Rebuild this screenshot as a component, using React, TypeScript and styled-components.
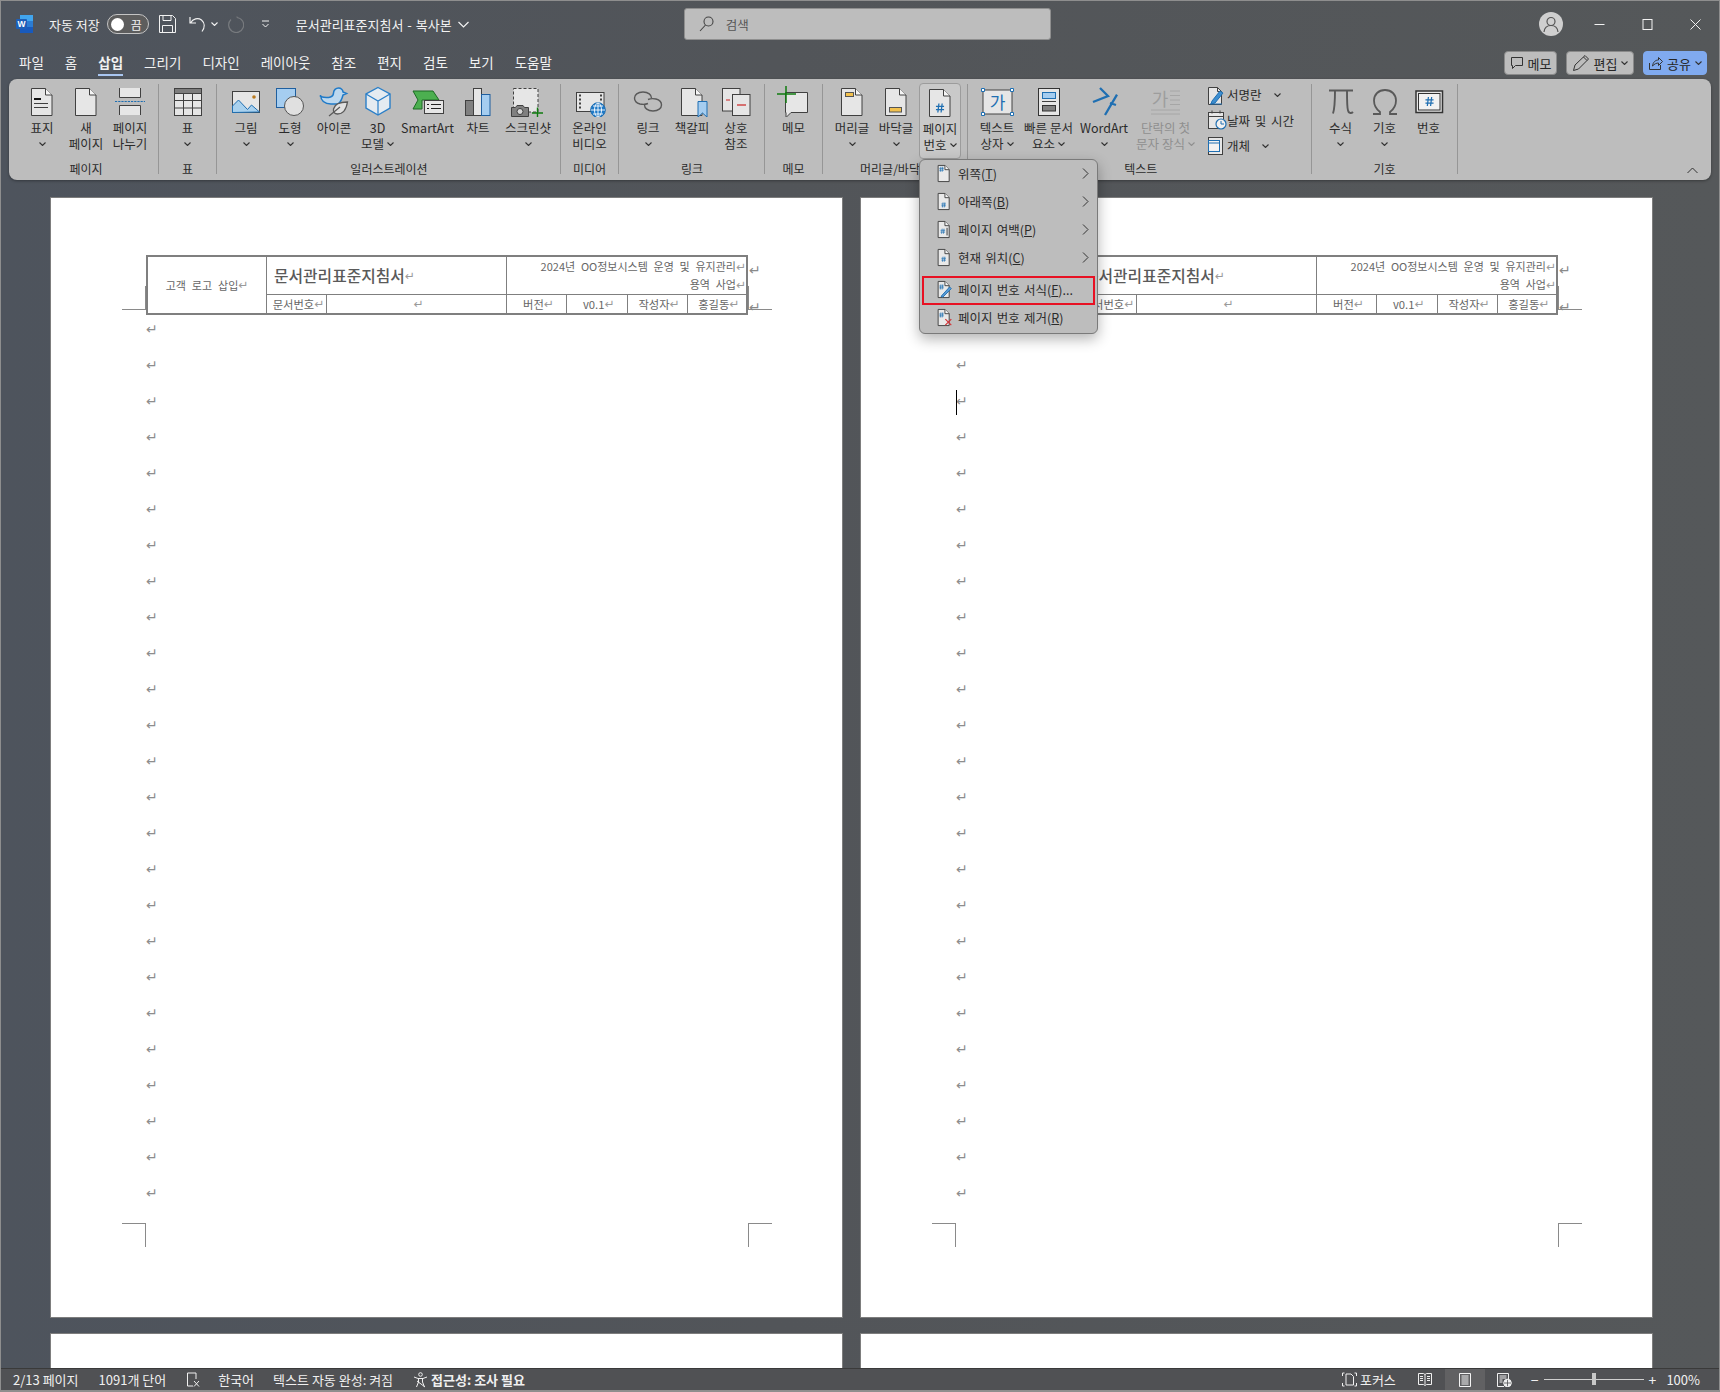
import React from "react";
import styled, { createGlobalStyle } from "styled-components";

const FONT = `"Noto Sans CJK KR", "Noto Sans", "Liberation Sans", sans-serif`;
const BLUE = "#1f6fb2";
const LINE = "#404040";
const PAPER = "#e6e6e6";

const Global = createGlobalStyle`
  html, body { margin: 0; padding: 0; background: #50555c; }
  * { box-sizing: border-box; }
  body { font-family: ${FONT}; }
`;

const Root = styled.div`
  position: relative;
  width: 1720px;
  height: 1392px;
  overflow: hidden;
  display: flex;
  flex-direction: column;
  border: 1px solid #8e8e8e;
  border-bottom-width: 2px;
  background: linear-gradient(90deg, #4e545d 0%, #525559 45%, #55585a 100%);
`;

/* ---------- title bar ---------- */
const TitleBar = styled.header`
  height: 49px;
  flex: none;
  display: flex;
  align-items: center;
  padding: 0 0 3px 15px;
  color: #f2f2f2;
  font-size: 13px;
`;
const TitleItem = styled.div<{ $ml: number }>`
  margin-left: ${(p) => p.$ml}px;
  display: flex;
  align-items: center;
  white-space: nowrap;
`;
const DocName = styled(TitleItem)`
  word-spacing: 1px;
`;
const Toggle = styled.div`
  width: 42px;
  height: 20px;
  margin-left: 7px;
  border: 1px solid #c4c4c4;
  border-radius: 10px;
  background: #5d5d5d;
  display: flex;
  align-items: center;
  justify-content: space-between;
  padding: 0 6px 0 3px;
  font-size: 12px;
  &::before {
    content: "";
    width: 13px;
    height: 13px;
    border-radius: 50%;
    background: #fff;
  }
`;
const Search = styled.div`
  width: 367px;
  height: 32px;
  margin-left: 215px;
  background: #bdbdbd;
  border: 1px solid #8f8f8f;
  border-radius: 3px;
  display: flex;
  align-items: center;
  gap: 12px;
  padding-left: 14px;
  font-size: 12.5px;
  color: #555;
`;
const WindowControls = styled.div`
  margin-left: auto;
  display: flex;
  align-items: center;
  height: 100%;
  padding-right: 18px;
  gap: 37px;
`;
const AccountSlot = styled.div`
  display: flex;
  margin-right: -6px;
`;

/* ---------- tabs ---------- */
const TabRow = styled.nav`
  height: 29px;
  flex: none;
  display: flex;
  align-items: flex-start;
  padding-left: 18px;
  gap: 21px;
  color: #f2f2f2;
  font-size: 13.5px;
`;
const Tab = styled.div<{ $active?: boolean }>`
  height: 26px;
  line-height: 25px;
  white-space: nowrap;
  font-weight: ${(p) => (p.$active ? 700 : 400)};
  border-bottom: 2px solid ${(p) => (p.$active ? "#a9c6f0" : "transparent")};
`;
const ShareGroup = styled.div`
  margin-left: auto;
  margin-right: 12px;
  margin-top: 1px;
  display: flex;
  gap: 9px;
`;
const ActionButton = styled.div<{ $w: number; $primary?: boolean }>`
  width: ${(p) => p.$w}px;
  height: 24px;
  border-radius: 4px;
  background: ${(p) => (p.$primary ? "#80aaef" : "#bdbdbd")};
  border: 1px solid ${(p) => (p.$primary ? "#80aaef" : "#8a8a8a")};
  color: #262626;
  font-size: 13px;
  display: flex;
  align-items: center;
  justify-content: center;
  gap: 4px;
`;

/* ---------- ribbon ---------- */
const Ribbon = styled.section`
  height: 101px;
  flex: none;
  margin: 0 8px;
  padding-top: 5px;
  width: 1702px;
  background: #bdbdbd;
  border-radius: 8px;
  box-shadow: 0 1px 3px rgba(0, 0, 0, 0.35);
  display: flex;
  position: relative;
  color: #2b2b2b;
`;
const Group = styled.div<{ $w: number; $pl?: number; $pr?: number }>`
  width: ${(p) => p.$w}px;
  height: 90px;
  flex: none;
  border-right: 1px solid #969696;
  padding-left: ${(p) => p.$pl ?? 0}px;
  padding-right: ${(p) => p.$pr ?? 0}px;
  display: flex;
  flex-direction: column;
`;
const GroupItems = styled.div<{ $center?: boolean }>`
  height: 78px;
  display: flex;
  justify-content: ${(p) => (p.$center ? "center" : "flex-start")};
`;
const GroupLabel = styled.div`
  height: 12px;
  line-height: 14px;
  font-size: 12px;
  text-align: center;
  white-space: nowrap;
`;
const RibbonButton = styled.div<{ $w?: number; $active?: boolean; $dim?: boolean }>`
  width: ${(p) => (p.$active ? 42 : p.$w ?? 44)}px;
  flex: none;
  height: ${(p) => (p.$active ? 76 : 74)}px;
  margin: ${(p) => (p.$active ? "-1px 1px 0" : "0")};
  padding-top: ${(p) => (p.$active ? 1 : 0)}px;
  border-radius: 4px;
  border: ${(p) => (p.$active ? "1px solid #9c9c9c" : "0")};
  background: ${(p) => (p.$active ? "#c9c9c9" : "transparent")};
  color: ${(p) => (p.$dim ? "#8f8f8f" : "inherit")};
  display: flex;
  flex-direction: column;
  align-items: center;
  font-size: 12.5px;
  line-height: 16px;
  white-space: nowrap;
`;
const IconSlot = styled.div`
  height: 36px;
  padding-top: 1px;
  flex: none;
`;
const LabelLine = styled.div`
  height: 16px;
  display: flex;
  align-items: center;
  gap: 3px;
`;
const SmallColumn = styled.div`
  display: flex;
  flex-direction: column;
  margin: -2px 0 0 10px;
`;
const SmallRow = styled.div`
  height: 25.5px;
  display: flex;
  align-items: center;
  font-size: 12.5px;
  white-space: nowrap;
  word-spacing: 2px;
`;
const SmallChevron = styled.span<{ $ml: number }>`
  margin-left: ${(p) => p.$ml}px;
  display: flex;
`;
const Collapse = styled.div`
  position: absolute;
  right: 13px;
  bottom: 6px;
  display: flex;
`;

/* ---------- document ---------- */
const DocArea = styled.main`
  flex: 1;
  min-height: 0;
  overflow: hidden;
  padding: 17px 0 0 49px;
  display: grid;
  grid-template-columns: 793px 793px;
  grid-auto-rows: 1121px;
  column-gap: 17px;
  row-gap: 15px;
  align-content: start;
`;
const Page = styled.article`
  position: relative;
  background: #fff;
  border: 1px solid #7d7d7d;
  padding: 57px 0 0 95px;
`;
const HeaderTable = styled.div`
  position: relative;
  width: 602px;
  height: 60px;
  border: 2px solid #7f7f7f;
  display: grid;
  grid-template-columns: 119px 60px 180px 60px 60.5px 60px 58.5px;
  grid-template-rows: 38px 1fr;
  font-size: 11px;
  color: #666;
`;
const Cell = styled.div<{ $col: string; $row?: string; $align?: string; $noRight?: boolean; $noBottom?: boolean }>`
  grid-column: ${(p) => p.$col};
  grid-row: ${(p) => p.$row ?? "auto"};
  display: flex;
  align-items: center;
  justify-content: ${(p) => p.$align ?? "center"};
  border-right: ${(p) => (p.$noRight ? "0" : "1px solid #7f7f7f")};
  border-bottom: ${(p) => (p.$noBottom ? "0" : "1px solid #7f7f7f")};
  white-space: nowrap;
  word-spacing: 3.5px;
`;
const FootCell = styled(Cell)`
  padding-left: 4px;
  font-size: 11.3px;
`;
const TitleCell = styled(Cell)`
  font-size: 15.8px;
  font-weight: 500;
  color: #5a5a5a;
  padding-left: 7px;
  word-spacing: 0;
`;
const RightCell = styled(Cell)`
  flex-direction: column;
  align-items: flex-end;
  padding-bottom: 2px;
  line-height: 18px;
  word-spacing: 3.3px;
`;
const Mark = styled.span`
  font-family: "DejaVu Sans", sans-serif;
  font-size: 12px;
  line-height: 1;
  color: #9a9a9a;
`;
const RowEnd = styled.span<{ $top: number }>`
  position: absolute;
  left: 601px;
  top: ${(p) => p.$top}px;
  font-family: "DejaVu Sans", sans-serif;
  font-size: 14px;
  line-height: 14px;
  color: #8a8a8a;
`;
const Paragraphs = styled.div`
  margin-top: 4px;
`;
const Paragraph = styled.div`
  position: relative;
  height: 36px;
  line-height: 20px;
  font-family: "DejaVu Sans", sans-serif;
  font-size: 14px;
  color: #8d8d8d;
`;
const Caret = styled.span`
  position: absolute;
  left: 0;
  top: -1px;
  width: 1px;
  height: 25px;
  background: #000;
`;
const CropMark = styled.div<{ $x: number; $y: number; $w: number; $h: number; $edges: string }>`
  position: absolute;
  left: ${(p) => p.$x}px;
  top: ${(p) => p.$y}px;
  width: ${(p) => p.$w}px;
  height: ${(p) => p.$h}px;
  border-style: solid;
  border-color: #8a8a8a;
  border-width: ${(p) => p.$edges};
`;

/* ---------- page-number menu ---------- */
const Menu = styled.div`
  position: absolute;
  left: 918px;
  top: 158px;
  width: 179px;
  height: 175px;
  padding: 1px 2px;
  background: #bdbdbd;
  border: 1px solid #7a7a7a;
  border-radius: 6px;
  box-shadow: 0 5px 14px rgba(0, 0, 0, 0.3);
  color: #2b2b2b;
  font-size: 12.5px;
`;
const MenuItem = styled.div<{ $h?: number; $selected?: boolean; $mt?: number }>`
  height: ${(p) => p.$h ?? 28}px;
  margin-top: ${(p) => p.$mt ?? 0}px;
  display: flex;
  align-items: center;
  padding: 0 0 3px ${(p) => (p.$selected ? 12 : 14)}px;
  border: ${(p) => (p.$selected ? "2px solid #e81123" : "0")};
  white-space: nowrap;
  word-spacing: 1.5px;
`;
const MenuIcon = styled.span`
  width: 22px;
  flex: none;
  display: flex;
`;
const Mnemonic = styled.span`
  text-decoration: underline;
`;
const MenuArrow = styled.span`
  margin-left: auto;
  margin-right: 6px;
  display: flex;
`;

/* ---------- status bar ---------- */
const StatusBar = styled.footer`
  position: relative;
  height: 22px;
  flex: none;
  border-top: 1px solid #3a3a3a;
  background: #505154;
  color: #f0f0f0;
  font-size: 13px;
  display: flex;
  align-items: center;
  padding-left: 12px;
`;
const StatusItem = styled.div<{ $ml: number; $bold?: boolean }>`
  margin-left: ${(p) => p.$ml}px;
  display: flex;
  align-items: center;
  gap: 3px;
  white-space: nowrap;
  font-weight: ${(p) => (p.$bold ? 700 : 400)};
`;
const StatusRight = styled.div`
  margin-left: auto;
  height: 100%;
  display: flex;
  align-items: center;
  padding-right: 19px;
`;
const ViewButton = styled.div<{ $active?: boolean; $ml: number }>`
  width: 40px;
  margin-left: ${(p) => p.$ml}px;
  height: 100%;
  display: flex;
  align-items: center;
  justify-content: center;
  background: ${(p) => (p.$active ? "#616163" : "transparent")};
`;
const ZoomTrack = styled.div`
  position: relative;
  width: 100px;
  height: 1px;
  margin: 0 5px;
  background: #cfcfcf;
  &::after {
    content: "";
    position: absolute;
    left: 48px;
    top: -6px;
    width: 4px;
    height: 12px;
    background: #c8c8c8;
  }
`;
const ZoomSign = styled.div<{ $ml: number }>`
  margin-left: ${(p) => p.$ml}px;
  font-size: 14px;
  line-height: 1;
`;
const ZoomValue = styled.div`
  margin-left: 10px;
`;

/* ---------- drawings ---------- */
type P = { children?: React.ReactNode };
const Ico = ({ children }: P) => (
  <svg width="40" height="32" viewBox="0 0 40 32" fill="none" stroke={LINE} strokeWidth="1">
    {children}
  </svg>
);
const DocShape = () => (
  <>
    <path d="M9.5 3.5h14l6.5 6.5v20.5H9.5z" fill={PAPER} />
    <path d="M23.5 3.5V10H30" fill="#f5f5f5" />
  </>
);
const Hash = ({ x, y, s = 1 }: { x: number; y: number; s?: number }) => (
  <path
    transform={`translate(${x} ${y}) scale(${s})`}
    d="M-1.2-5-2.4 5M2.4-5 1.2 5M-4.5-1.8H4.5M-4.5 1.8H4.5"
    stroke={BLUE}
    strokeWidth="1.4"
  />
);
const Chevron = ({ c = "#333" }: { c?: string }) => (
  <svg width="7" height="4" viewBox="0 0 7 4" fill="none" stroke={c} strokeWidth="1.1">
    <path d="M.5.5 3.5 3.5 6.5.5" />
  </svg>
);

const CoverIcon = () => (
  <Ico>
    <DocShape />
    <path d="M12 14h7" stroke="#111" strokeWidth="2" />
    <path d="M12 18.5h14M12 22.5h14" />
  </Ico>
);
const BlankIcon = () => (
  <Ico>
    <DocShape />
  </Ico>
);
const BreakIcon = () => (
  <Ico>
    <path d="M9.5 3v9.5h21V3" fill={PAPER} />
    <path d="M5 16.5h30" stroke={BLUE} strokeDasharray="2.2 1" />
    <path d="M9.5 30V20.5h21V30" fill={PAPER} />
  </Ico>
);
const TableIcon = () => (
  <Ico>
    <rect x="6.5" y="3.5" width="27" height="27" fill={PAPER} />
    <rect x="6.5" y="3.5" width="27" height="5" fill="#7d7d7d" />
    <path d="M15.5 8.5v22M24.5 8.5v22M6.5 15.5h27M6.5 23h27" />
  </Ico>
);
const PictureIcon = () => (
  <Ico>
    <rect x="6.5" y="6.5" width="27" height="21" fill={PAPER} />
    <path d="M6.5 27.5V21l6-6 9 9.5 4-4.5 8 7z" fill="#a9d1ee" stroke={BLUE} />
    <circle cx="28" cy="12" r="1.8" fill="#b8791f" stroke="none" />
  </Ico>
);
const ShapeIcon = () => (
  <Ico>
    <rect x="6.5" y="3.5" width="19" height="19" fill="#a5cdf0" stroke="#1f5f9f" />
    <circle cx="24" cy="21" r="9.5" fill="#e0e0e0" stroke="#555" />
  </Ico>
);
const IconsIcon = () => (
  <Ico>
    <path
      d="M6.5 11.5c3 1 7 1.5 10 .5 1.5-.5 3-2 3-4 0-3 2.5-5 5-5s4.5 2 4.5 4l3.5 1.5-3.5 1.5c-1 4-2 7-5 9H17c-6 0-10-3-10.5-9z"
      fill="#bcd8ef"
      stroke="#1f7ac8"
      strokeWidth="1.5"
    />
    <path d="M33.5 17c-7 0-13 2-14 7-.5 3 1 5 4 5 6 0 9-6 10-12z" fill="#e0e0e0" stroke="#595959" strokeWidth="1.3" />
    <path d="M26 22l-11 9" stroke="#595959" strokeWidth="1.2" />
  </Ico>
);
const CubeIcon = () => (
  <Ico>
    <path d="M20 2.5 32 9v14l-12 7-12-7V9z" fill="#e4ebf1" stroke="#2a7fc8" strokeWidth="1.4" />
    <path d="M8 9l12 7 12-7M20 16v14" stroke="#2a7fc8" strokeWidth="1.2" />
  </Ico>
);
const SmartArtIcon = () => (
  <Ico>
    <path d="M5 6h20l6 9H14v9H5l5-9z" fill="#4caf50" stroke="#1d6b24" />
    <rect x="16.5" y="15.5" width="19" height="13" fill={PAPER} />
    <path d="M19 19.5h2M23 19.5h10M19 23.5h2M23 23.5h10" stroke="#222" />
  </Ico>
);
const ChartIcon = () => (
  <Ico>
    <rect x="7.5" y="15.5" width="8" height="15" fill="#808080" />
    <rect x="15.5" y="3.5" width="8" height="27" fill={PAPER} />
    <rect x="23.5" y="9.5" width="8.5" height="21" fill="#a5cdf0" stroke="#1f5f9f" />
  </Ico>
);
const ScreenshotIcon = () => (
  <Ico>
    <rect x="5.5" y="3.5" width="24.5" height="23.5" fill={PAPER} strokeDasharray="3 2" />
    <path d="M3.5 22.5h4l1.5-2h6l1.5 2h4v9h-17z" fill="#808080" />
    <circle cx="12" cy="26.5" r="3" fill="#d8d8d8" />
    <path d="M24 28h11M29.5 22.5v11" stroke="#107c10" strokeWidth="1.4" />
  </Ico>
);
const VideoIcon = () => (
  <Ico>
    <rect x="6.5" y="7.5" width="27.5" height="19" fill={PAPER} />
    <path d="M10 9.5v15M31 9.5v8" strokeDasharray="2 2" strokeWidth="2" />
    <circle cx="28" cy="25" r="7.3" fill="#1f7ac8" stroke="#1f6fb2" />
    <path d="M21 25h14M28 18v14M23 21h10M23 29h10" stroke="#fff" strokeWidth=".9" />
    <ellipse cx="28" cy="25" rx="3.5" ry="7" stroke="#fff" strokeWidth=".9" />
  </Ico>
);
const LinkIcon = () => (
  <Ico>
    <path d="M20 18.5c-2.500 1-5.500 1-8 .5-3-.8-5.500-3-5.500-6s3-6 8.500-6 8.500 3 8.500 6" stroke="#595959" strokeWidth="1.4" />
    <path d="M20 14.500c2.500-1 5.500-1 8-.5 3 .8 5.500 3 5.500 6s-3 6-8.500 6-8.500-3-8.500-6" stroke="#595959" strokeWidth="1.4" />
  </Ico>
);
const BookmarkIcon = () => (
  <Ico>
    <DocShape />
    <path d="M26 16.5h9V32l-4.500-4-4.500 4z" fill="#a5cdf0" stroke={BLUE} />
  </Ico>
);
const CrossRefIcon = () => (
  <Ico>
    <rect x="6.5" y="3.5" width="17.5" height="22.5" fill={PAPER} />
    <path d="M10 15h4" stroke="#c22" />
    <rect x="16.5" y="9.5" width="17.5" height="21" fill={PAPER} />
    <path d="M21 20h9" stroke="#c22" strokeWidth="1.2" />
  </Ico>
);
const CommentIcon = () => (
  <Ico>
    <path d="M11.5 7.5h22v20H17l-5 5v-5h-.5z" fill={PAPER} />
    <path d="M3 9h19M12 1v17" stroke="#107c10" strokeWidth="1.5" />
  </Ico>
);
const HeaderIcon = () => (
  <Ico>
    <DocShape />
    <rect x="13.5" y="7.5" width="8" height="4" fill="#f2c14e" stroke="#555" />
  </Ico>
);
const FooterIcon = () => (
  <Ico>
    <DocShape />
    <rect x="13.5" y="22.5" width="12" height="4.5" fill="#f2c14e" stroke="#555" />
  </Ico>
);
const PageNumberIcon = () => (
  <Ico>
    <DocShape />
    <Hash x={20} y={22} s={0.9} />
  </Ico>
);
const TextBoxIcon = () => (
  <Ico>
    <rect x="6" y="5" width="29" height="24" fill={PAPER} stroke="#444" />
    <path d="M4.5 3.5h3v3h-3zM33.5 3.5h3v3h-3zM4.5 27.5h3v3h-3zM33.5 27.5h3v3h-3z" fill="#fff" stroke={BLUE} />
    <text x="20.5" y="24" textAnchor="middle" fontSize="17" fill={BLUE} stroke="none" fontFamily={FONT}>
      가
    </text>
  </Ico>
);
const QuickPartsIcon = () => (
  <Ico>
    <rect x="9.5" y="3.5" width="21" height="27" fill={PAPER} stroke="#333" />
    <rect x="13.5" y="7.5" width="13" height="6" fill="#a5cdf0" stroke={BLUE} />
    <path d="M13 16.5h14" />
    <rect x="13.5" y="20.5" width="13" height="5.5" fill="#808080" stroke="#333" />
  </Ico>
);
const WordArtIcon = () => (
  <Ico>
    <path d="M16 3l8 8-15 6M33 9.7 21 30M26 18l6 2" stroke={BLUE} strokeWidth="2.3" />
  </Ico>
);
const DropCapIcon = () => (
  <Ico>
    <text x="14" y="21" textAnchor="middle" fontSize="18" fill="#9d9d9d" stroke="none" fontFamily={FONT}>
      가
    </text>
    <path d="M24 6h10M24 10.5h10M24 15h10M24 19.5h10M5 25h29M5 29h29" stroke="#a6a6a6" />
  </Ico>
);
const PiIcon = () => (
  <Ico>
    <path d="M8 5.5h24" stroke="#595959" strokeWidth="2" />
    <path d="M14 5.5c0 10 0 17-2 23M26 5.5c0 10 0 17 1 20 .5 2.5 3 3.5 5 1.5" stroke="#595959" strokeWidth="1.9" />
  </Ico>
);
const OmegaIcon = () => (
  <Ico>
    <path
      d="M8 29h7v-2c-4-3-6-7-6-11.5C9 9.5 13.5 5 20 5s11 4.500 11 10.500c0 4.500-2 8.500-6 11.500v2h7"
      stroke="#595959"
      strokeWidth="1.8"
    />
  </Ico>
);
const NumberIcon = () => (
  <Ico>
    <rect x="7" y="6" width="26.5" height="21.5" fill={PAPER} stroke="#333" strokeWidth="1.5" />
    <rect x="9.5" y="8.5" width="21.5" height="16.5" fill="#f2f2f2" stroke="#333" />
    <Hash x={20.5} y={16.5} s={0.9} />
  </Ico>
);

const Mini = ({ children }: P) => (
  <svg width="20" height="22" viewBox="0 0 20 22" fill="none" stroke={LINE} strokeWidth="1">
    {children}
  </svg>
);
const SignatureIcon = () => (
  <Mini>
    <path d="M1.5 3.5h9l4 4v13h-13z" fill={PAPER} />
    <path d="M10.5 3.5v4h4" />
    <path d="M5 17 13 7l3 2-8 10-4 1z" fill="#3d8ed0" stroke={BLUE} />
    <path d="M3 20h12" stroke={BLUE} />
  </Mini>
);
const DateIcon = () => (
  <Mini>
    <rect x="1.5" y="3.5" width="15" height="16" fill={PAPER} />
    <path d="M1.5 7.5h15M5 1.5v3M13 1.5v3" />
    <circle cx="14" cy="15" r="5" fill="#f0f0f0" stroke={BLUE} strokeWidth="1.2" />
    <path d="M14 12v3h3" stroke={BLUE} />
  </Mini>
);
const ObjectIcon = () => (
  <Mini>
    <rect x="1.5" y="2.5" width="14" height="17" fill={PAPER} />
    <rect x="1.5" y="5.5" width="11" height="11" fill="#f2f2f2" stroke={BLUE} />
    <path d="M1.5 8h11" stroke={BLUE} />
  </Mini>
);

const MenuDoc = ({ children }: P) => (
  <svg width="17" height="19" viewBox="0 0 20 22" fill="none" stroke={LINE} strokeWidth="1.1">
    <path d="M2.5 1.5h8l5 5v14h-13z" fill="#e9e9e9" />
    <path d="M10.5 1.5v5h5" fill="#f5f5f5" />
    {children}
  </svg>
);

/* ---------- top icons ---------- */
const WordLogo = () => (
  <svg width="18" height="18" viewBox="0 0 18 18">
    <rect x="4" y="0" width="13" height="6" fill="#41a5ee" />
    <rect x="4" y="6" width="13" height="6" fill="#2b7cd3" />
    <rect x="4" y="12" width="13" height="6" fill="#185abd" />
    <rect x="0" y="4" width="11" height="10" rx="1" fill="#1d5fb8" />
    <text x="5.5" y="12" textAnchor="middle" fontSize="8.5" fontWeight="700" fill="#fff" fontFamily="Liberation Sans, sans-serif">
      W
    </text>
  </svg>
);
const SaveIcon = () => (
  <svg width="17" height="18" viewBox="0 0 17 18" fill="none" stroke="#f2f2f2" strokeWidth="1">
    <path d="M.5.5h13l3 3v14H.5z" />
    <path d="M4 .5v5h8v-5M3.5 17.5V10.5h10v7" />
  </svg>
);
const UndoIcon = ({ c = "#f2f2f2" }: { c?: string }) => (
  <svg width="18" height="18" viewBox="0 0 18 18" fill="none" stroke={c} strokeWidth="1.2">
    <path d="M1 2v6h6M1.500 8C4 3.500 9 2.500 12.500 5c3.500 3 3.500 7.500.5 11.500" />
  </svg>
);
const RedoIcon = () => (
  <svg width="17" height="17" viewBox="0 0 17 17" fill="none" stroke="#777a7e" strokeWidth="1.2">
    <path d="M10 1.500A7.500 7.500 0 1 1 4 3.500M10 1.500v-1" />
  </svg>
);
const QatIcon = () => (
  <svg width="9" height="8" viewBox="0 0 9 8" fill="none" stroke="#f2f2f2">
    <path d="M1 1h7M1.500 4 4.500 7l3-3" />
  </svg>
);
const TitleChevron = () => (
  <svg width="11" height="7" viewBox="0 0 11 7" fill="none" stroke="#f2f2f2" strokeWidth="1.2">
    <path d="M.5 1l5 5 5-5" />
  </svg>
);
const Magnifier = () => (
  <svg width="15" height="16" viewBox="0 0 15 16" fill="none" stroke="#444" strokeWidth="1.1">
    <circle cx="9.5" cy="5.5" r="4.5" />
    <path d="M6.5 9 1 15" />
  </svg>
);
const Account = () => (
  <svg width="24" height="24" viewBox="0 0 24 24" fill="none">
    <circle cx="12" cy="12" r="12" fill="#cfcfcf" />
    <circle cx="12" cy="9.5" r="4" stroke="#555" strokeWidth="1.2" />
    <path d="M5 20c.5-4.500 3.500-6.500 7-6.500s6.500 2 7 6.500" stroke="#555" strokeWidth="1.2" />
  </svg>
);
const WinMin = () => (
  <svg width="11" height="11" viewBox="0 0 11 11" stroke="#f2f2f2">
    <path d="M.5 5.5h10" />
  </svg>
);
const WinMax = () => (
  <svg width="11" height="11" viewBox="0 0 11 11" fill="none" stroke="#f2f2f2">
    <rect x="1" y=".5" width="9" height="10" />
  </svg>
);
const WinClose = () => (
  <svg width="11" height="11" viewBox="0 0 11 11" stroke="#f2f2f2">
    <path d="M.5.5l10 10M10.5.5l-10 10" />
  </svg>
);
const BubbleSmall = () => (
  <svg width="14" height="14" viewBox="0 0 14 14" fill="none" stroke="#333">
    <path d="M1.500 1.500h11v8H5.500l-3 3v-3h-1z" />
  </svg>
);
const PencilSmall = () => (
  <svg width="18" height="18" viewBox="0 0 18 18" fill="none" stroke="#333">
    <path d="M1.500 16.500 3 11 13 1.500 16.500 5 6.500 15z" />
    <path d="M11.500 3 15 6.500" />
  </svg>
);
const ShareSmall = () => (
  <svg width="15" height="15" viewBox="0 0 15 15" fill="none" stroke="#333">
    <path d="M1.500 7v6.500h11V9" />
    <path d="M4.500 10c.5-4 3-6 6-6V1.500l4 4-4 4V7c-2 0-4 .8-6 3z" />
  </svg>
);
const CollapseIcon = () => (
  <svg width="11" height="7" viewBox="0 0 11 7" fill="none" stroke="#333">
    <path d="M.5 6l5-5 5 5" />
  </svg>
);
const SubArrow = () => (
  <svg width="7" height="11" viewBox="0 0 7 11" fill="none" stroke="#333">
    <path d="M1 .5l5 5-5 5" />
  </svg>
);

/* ---------- status icons ---------- */
const ProofIcon = () => (
  <svg width="15" height="15" viewBox="0 0 15 15" fill="none" stroke="#f0f0f0">
    <path d="M7 1H1.500v13H7M7 1h3v6" />
    <path d="M8 9l5 5.500M13 9l-5 5.500" />
  </svg>
);
const AccessIcon = () => (
  <svg width="15" height="16" viewBox="0 0 15 16" fill="none" stroke="#f0f0f0">
    <circle cx="7.5" cy="2.5" r="1.8" />
    <path d="M1 5l4 1.500h5L14 5M5.500 7v3l-2 5M9.500 7v3l2 5" />
    <path d="M4 9l8 6" />
  </svg>
);
const FocusIcon = () => (
  <svg width="15" height="15" viewBox="0 0 15 15" fill="none" stroke="#f0f0f0">
    <path d="M2.500 1H.5v3M12.500 1h2v3M.5 11v3h2M14.500 11v3h-2" />
    <path d="M4 2h5l2.500 2.500V13H4z" />
  </svg>
);
const ReadIcon = () => (
  <svg width="14" height="13" viewBox="0 0 14 13" fill="none" stroke="#f0f0f0">
    <path d="M.5.5h5l1.500 1 1.500-1h5v11h-5l-1.500 1-1.500-1h-5zM7 1.500v10M2 3.500h3M2 5.500h3M2 7.500h3M9 3.500h3M9 5.500h3M9 7.500h3" />
  </svg>
);
const PrintIcon = () => (
  <svg width="12" height="14" viewBox="0 0 12 14" fill="none" stroke="#f4f4f4">
    <path d="M.5.5h11v13H.5zM2.500 3h7M2.500 5h7M2.500 7h7M2.500 9h7M2.500 11h7" />
  </svg>
);
const WebIcon = () => (
  <svg width="15" height="14" viewBox="0 0 15 14" fill="none" stroke="#f0f0f0">
    <path d="M7 13.500H.5V.5h11V6M2.500 3h7M2.500 5h7M2.500 7h3M2.500 9h3" />
    <circle cx="10.5" cy="10" r="3.8" fill="#f0f0f0" />
    <path d="M7 10h7M10.500 7v6" stroke="#505154" strokeWidth=".8" />
  </svg>
);

/* ---------- data ---------- */
type Btn = { icon: React.ReactNode; lines: string[]; chevron?: "own" | "inline"; w?: number; active?: boolean; dim?: boolean };
const RBtn = ({ icon, lines, chevron, w, active, dim }: Btn) => (
  <RibbonButton $w={w} $active={active} $dim={dim}>
    <IconSlot>{icon}</IconSlot>
    {lines.map((l, i) => (
      <LabelLine key={l}>
        {l}
        {chevron === "inline" && i === lines.length - 1 && <Chevron c={dim ? "#8f8f8f" : "#333"} />}
      </LabelLine>
    ))}
    {chevron === "own" && (
      <LabelLine>
        <Chevron />
      </LabelLine>
    )}
  </RibbonButton>
);

const TABS = ["파일", "홈", "삽입", "그리기", "디자인", "레이아웃", "참조", "편지", "검토", "보기", "도움말"];

const MarkChar = () => <Mark>↵</Mark>;

const DocHeader = () => (
  <HeaderTable>
    <Cell $col="1" $row="1 / span 2" $noBottom>
      고객 로고 삽입
      <MarkChar />
    </Cell>
    <TitleCell $col="2 / span 2" $row="1" $align="flex-start">
      문서관리표준지침서
      <MarkChar />
    </TitleCell>
    <RightCell $col="4 / span 4" $row="1" $noRight>
      <span>
        2024년 OO정보시스템 운영 및 유지관리
        <MarkChar />
      </span>
      <span>
        용역 사업
        <MarkChar />
      </span>
    </RightCell>
    <FootCell $col="2" $row="2" $noBottom>
      문서번호
      <MarkChar />
    </FootCell>
    <FootCell $col="3" $row="2" $noBottom>
      <MarkChar />
    </FootCell>
    <FootCell $col="4" $row="2" $noBottom>
      버전
      <MarkChar />
    </FootCell>
    <FootCell $col="5" $row="2" $noBottom>
      v0.1
      <MarkChar />
    </FootCell>
    <FootCell $col="6" $row="2" $noBottom>
      작성자
      <MarkChar />
    </FootCell>
    <FootCell $col="7" $row="2" $noBottom $noRight>
      홍길동
      <MarkChar />
    </FootCell>
    <RowEnd $top={6}>↵</RowEnd>
    <RowEnd $top={43}>↵</RowEnd>
  </HeaderTable>
);

const Crops = () => (
  <>
    <CropMark $x={71} $y={88} $w={24} $h={24} $edges="0 1px 1px 0" />
    <CropMark $x={697} $y={88} $w={24} $h={24} $edges="0 0 1px 1px" />
    <CropMark $x={71} $y={1025} $w={24} $h={24} $edges="1px 1px 0 0" />
    <CropMark $x={697} $y={1025} $w={24} $h={24} $edges="1px 0 0 1px" />
  </>
);

const PARAS = Array.from({ length: 25 }, (_, i) => i);

const FullPage = ({ caretAt }: { caretAt?: number }) => (
  <Page>
    <Crops />
    <DocHeader />
    <Paragraphs>
      {PARAS.map((i) => (
        <Paragraph key={i}>
          {caretAt === i && <Caret />}↵
        </Paragraph>
      ))}
    </Paragraphs>
  </Page>
);

export default function App() {
  return (
    <>
      <Global />
      <Root>
        <TitleBar>
          <TitleItem $ml={0}>
            <WordLogo />
          </TitleItem>
          <TitleItem $ml={15}>
            자동 저장
            <Toggle>끔</Toggle>
          </TitleItem>
          <TitleItem $ml={10}>
            <SaveIcon />
          </TitleItem>
          <TitleItem $ml={13}>
            <UndoIcon />
          </TitleItem>
          <TitleItem $ml={4}>
            <Chevron c="#f2f2f2" />
          </TitleItem>
          <TitleItem $ml={9}>
            <RedoIcon />
          </TitleItem>
          <TitleItem $ml={17}>
            <QatIcon />
          </TitleItem>
          <DocName $ml={26}>
            문서관리표준지침서 - 복사본
            <TitleItem $ml={6}>
              <TitleChevron />
            </TitleItem>
          </DocName>
          <Search>
            <Magnifier />
            검색
          </Search>
          <WindowControls>
            <AccountSlot>
              <Account />
            </AccountSlot>
            <WinMin />
            <WinMax />
            <WinClose />
          </WindowControls>
        </TitleBar>

        <TabRow>
          {TABS.map((t) => (
            <Tab key={t} $active={t === "삽입"}>
              {t}
            </Tab>
          ))}
          <ShareGroup>
            <ActionButton $w={53}>
              <BubbleSmall />
              메모
            </ActionButton>
            <ActionButton $w={68}>
              <PencilSmall />
              편집
              <Chevron />
            </ActionButton>
            <ActionButton $w={64} $primary>
              <ShareSmall />
              공유
              <Chevron />
            </ActionButton>
          </ShareGroup>
        </TabRow>

        <Ribbon>
          <Group $w={150} $pl={11} $pr={6}>
            <GroupItems>
              <RBtn icon={<CoverIcon />} lines={["표지"]} chevron="own" />
              <RBtn icon={<BlankIcon />} lines={["새", "페이지"]} />
              <RBtn icon={<BreakIcon />} lines={["페이지", "나누기"]} />
            </GroupItems>
            <GroupLabel>페이지</GroupLabel>
          </Group>
          <Group $w={58}>
            <GroupItems $center>
              <RBtn icon={<TableIcon />} lines={["표"]} chevron="own" />
            </GroupItems>
            <GroupLabel>표</GroupLabel>
          </Group>
          <Group $w={344} $pl={7} $pr={6}>
            <GroupItems>
              <RBtn icon={<PictureIcon />} lines={["그림"]} chevron="own" />
              <RBtn icon={<ShapeIcon />} lines={["도형"]} chevron="own" />
              <RBtn icon={<IconsIcon />} lines={["아이콘"]} />
              <RBtn icon={<CubeIcon />} lines={["3D", "모델"]} chevron="inline" w={43} />
              <RBtn icon={<SmartArtIcon />} lines={["SmartArt"]} w={57} />
              <RBtn icon={<ChartIcon />} lines={["차트"]} />
              <RBtn icon={<ScreenshotIcon />} lines={["스크린샷"]} chevron="own" w={56} />
            </GroupItems>
            <GroupLabel>일러스트레이션</GroupLabel>
          </Group>
          <Group $w={58}>
            <GroupItems $center>
              <RBtn icon={<VideoIcon />} lines={["온라인", "비디오"]} />
            </GroupItems>
            <GroupLabel>미디어</GroupLabel>
          </Group>
          <Group $w={146} $pl={7} $pr={6}>
            <GroupItems>
              <RBtn icon={<LinkIcon />} lines={["링크"]} chevron="own" />
              <RBtn icon={<BookmarkIcon />} lines={["책갈피"]} />
              <RBtn icon={<CrossRefIcon />} lines={["상호", "참조"]} />
            </GroupItems>
            <GroupLabel>링크</GroupLabel>
          </Group>
          <Group $w={58}>
            <GroupItems $center>
              <RBtn icon={<CommentIcon />} lines={["메모"]} />
            </GroupItems>
            <GroupLabel>메모</GroupLabel>
          </Group>
          <Group $w={145} $pl={7} $pr={6}>
            <GroupItems>
              <RBtn icon={<HeaderIcon />} lines={["머리글"]} chevron="own" />
              <RBtn icon={<FooterIcon />} lines={["바닥글"]} chevron="own" />
              <RBtn icon={<PageNumberIcon />} lines={["페이지", "번호"]} chevron="inline" active />
            </GroupItems>
            <GroupLabel>머리글/바닥글</GroupLabel>
          </Group>
          <Group $w={343.5} $pl={3}>
            <GroupItems>
              <RBtn icon={<TextBoxIcon />} lines={["텍스트", "상자"]} chevron="inline" w={52} />
              <RBtn icon={<QuickPartsIcon />} lines={["빠른 문서", "요소"]} chevron="inline" w={51} />
              <RBtn icon={<WordArtIcon />} lines={["WordArt"]} chevron="own" w={60} />
              <RBtn icon={<DropCapIcon />} lines={["단락의 첫", "문자 장식"]} chevron="inline" w={63} dim />
              <SmallColumn>
                <SmallRow>
                  <SignatureIcon />
                  서명란
                  <SmallChevron $ml={12}>
                    <Chevron />
                  </SmallChevron>
                </SmallRow>
                <SmallRow>
                  <DateIcon />
                  날짜 및 시간
                </SmallRow>
                <SmallRow>
                  <ObjectIcon />
                  개체
                  <SmallChevron $ml={12}>
                    <Chevron />
                  </SmallChevron>
                </SmallRow>
              </SmallColumn>
            </GroupItems>
            <GroupLabel>텍스트</GroupLabel>
          </Group>
          <Group $w={146} $pl={7} $pr={6}>
            <GroupItems>
              <RBtn icon={<PiIcon />} lines={["수식"]} chevron="own" />
              <RBtn icon={<OmegaIcon />} lines={["기호"]} chevron="own" />
              <RBtn icon={<NumberIcon />} lines={["번호"]} />
            </GroupItems>
            <GroupLabel>기호</GroupLabel>
          </Group>
          <Collapse>
            <CollapseIcon />
          </Collapse>
        </Ribbon>

        <DocArea>
          <FullPage />
          <FullPage caretAt={2} />
          <Page />
          <Page />
        </DocArea>

        <StatusBar>
          <StatusItem $ml={0}>2/13 페이지</StatusItem>
          <StatusItem $ml={20}>1091개 단어</StatusItem>
          <StatusItem $ml={20}>
            <ProofIcon />
          </StatusItem>
          <StatusItem $ml={17}>한국어</StatusItem>
          <StatusItem $ml={19}>텍스트 자동 완성: 켜짐</StatusItem>
          <StatusItem $ml={20} $bold>
            <AccessIcon />
            접근성: 조사 필요
          </StatusItem>
          <StatusRight>
            <StatusItem $ml={0}>
              <FocusIcon />
              포커스
            </StatusItem>
            <ViewButton $ml={9}>
              <ReadIcon />
            </ViewButton>
            <ViewButton $ml={0} $active>
              <PrintIcon />
            </ViewButton>
            <ViewButton $ml={0}>
              <WebIcon />
            </ViewButton>
            <ZoomSign $ml={6}>−</ZoomSign>
            <ZoomTrack />
            <ZoomSign $ml={0}>+</ZoomSign>
            <ZoomValue>100%</ZoomValue>
          </StatusRight>
        </StatusBar>

        <Menu>
          <MenuItem>
            <MenuIcon>
              <MenuDoc>
                <Hash x={6.5} y={6} s={0.6} />
              </MenuDoc>
            </MenuIcon>
            위쪽(<Mnemonic>T</Mnemonic>)
            <MenuArrow>
              <SubArrow />
            </MenuArrow>
          </MenuItem>
          <MenuItem>
            <MenuIcon>
              <MenuDoc>
                <Hash x={9} y={15} s={0.6} />
              </MenuDoc>
            </MenuIcon>
            아래쪽(<Mnemonic>B</Mnemonic>)
            <MenuArrow>
              <SubArrow />
            </MenuArrow>
          </MenuItem>
          <MenuItem>
            <MenuIcon>
              <MenuDoc>
                <Hash x={8} y={13} s={0.6} />
                <path d="M13 9v9" stroke="#333" />
              </MenuDoc>
            </MenuIcon>
            페이지 여백(<Mnemonic>P</Mnemonic>)
            <MenuArrow>
              <SubArrow />
            </MenuArrow>
          </MenuItem>
          <MenuItem>
            <MenuIcon>
              <MenuDoc>
                <Hash x={9} y={13} s={0.6} />
              </MenuDoc>
            </MenuIcon>
            현재 위치(<Mnemonic>C</Mnemonic>)
            <MenuArrow>
              <SubArrow />
            </MenuArrow>
          </MenuItem>
          <MenuItem $selected $h={29} $mt={3}>
            <MenuIcon>
              <MenuDoc>
                <Hash x={6.5} y={8} s={0.6} />
                <path d="M6 19l10-11 2 2-10 10z" fill="#5b9bd5" stroke={BLUE} />
              </MenuDoc>
            </MenuIcon>
            페이지 번호 서식(<Mnemonic>F</Mnemonic>)...
          </MenuItem>
          <MenuItem>
            <MenuIcon>
              <MenuDoc>
                <Hash x={6.5} y={8} s={0.6} />
                <path d="M11 13l7 7M18 13l-7 7" stroke="#d13438" strokeWidth="1.4" />
              </MenuDoc>
            </MenuIcon>
            페이지 번호 제거(<Mnemonic>R</Mnemonic>)
          </MenuItem>
        </Menu>
      </Root>
    </>
  );
}
